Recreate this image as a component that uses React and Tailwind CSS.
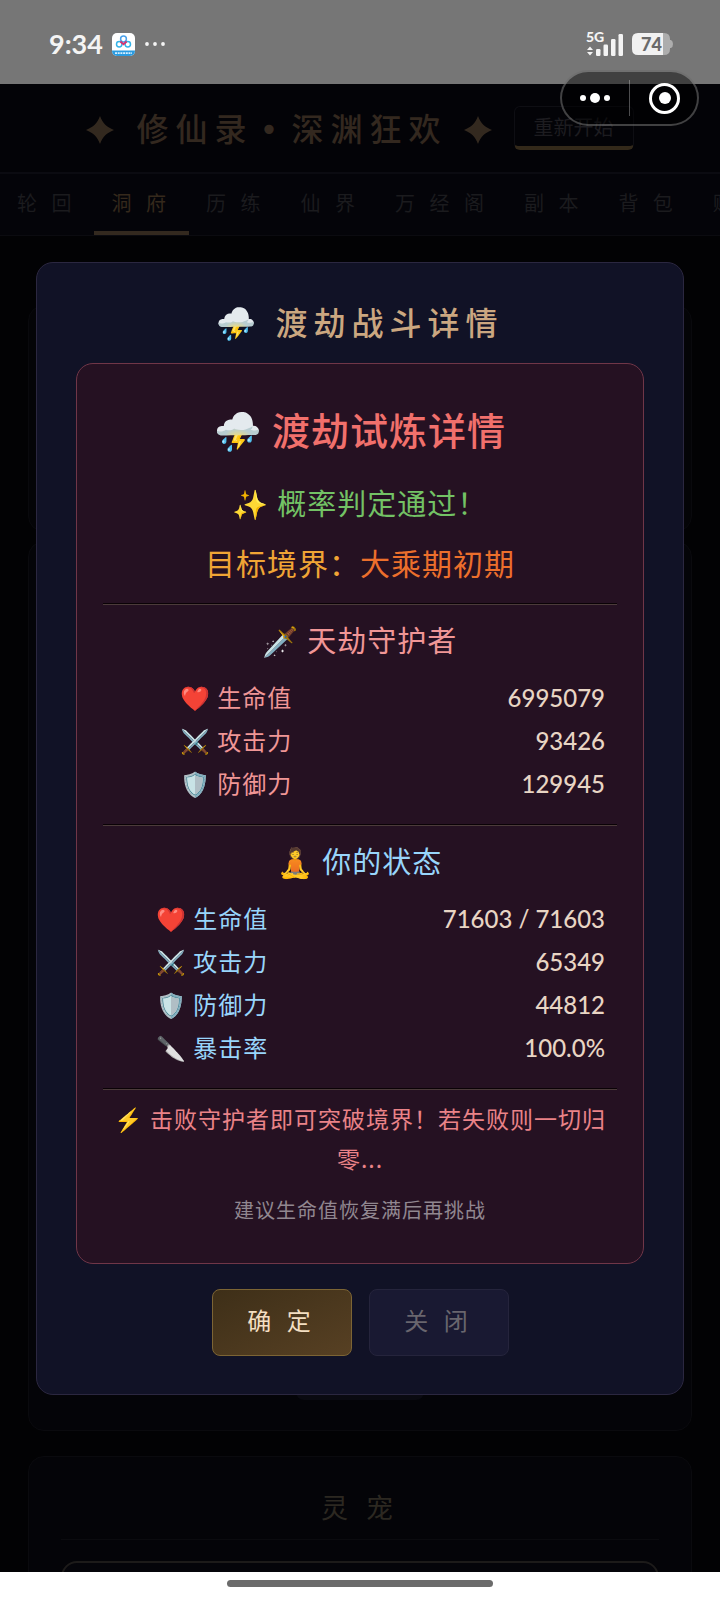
const tabs = ['轮 回', '洞 府', '历 练', '仙 界', '万 经 阁', '副 本', '背 包', '赐 福'];

const guardianStats = [
  { icon: '❤️', label: '生命值', value: '6995079' },
  { icon: '⚔️', label: '攻击力', value: '93426' },
  { icon: '🛡️', label: '防御力', value: '129945' },
];

const playerStats = [
  { icon: '❤️', label: '生命值', value: '71603 / 71603' },
  { icon: '⚔️', label: '攻击力', value: '65349' },
  { icon: '🛡️', label: '防御力', value: '44812' },
  { icon: '🔪', label: '暴击率', value: '100.0%' },
];

function Star() {
  return (
    <svg viewBox="0 0 28 28" className="mt-1 size-7 shrink-0" aria-hidden="true">
      <path
        d="M14 0 C17 7.5 20.5 11 28 14 C20.5 17 17 20.5 14 28 C11 20.5 7.5 17 0 14 C7.5 11 11 7.5 14 0Z"
        fill="#33291f"
      />
    </svg>
  );
}

function StatusBar() {
  return (
    <div className="flex h-[84px] shrink-0 items-center bg-[#767676] pt-1 pr-[46px] pl-[49px] text-[#f4f4f4]">
      <span className="font-['Lato'] text-[27px] leading-8 font-bold">9:34</span>
      <svg viewBox="0 0 23 23" className="ml-[9px] size-[23px]" aria-hidden="true">
        <clipPath id="app-clip">
          <rect width="23" height="23" rx="5" />
        </clipPath>
        <g clipPath="url(#app-clip)">
          <rect width="23" height="23" fill="#fff" />
          <rect y="17.5" width="23" height="6" fill="#2b9be0" />
          <circle cx="7.2" cy="11.3" r="2.7" fill="none" stroke="#35b3e8" strokeWidth="1.5" />
          <circle cx="15.8" cy="11.3" r="2.7" fill="none" stroke="#35b3e8" strokeWidth="1.5" />
          <circle cx="11.5" cy="6" r="2.9" fill="none" stroke="#4aa0ea" strokeWidth="1.5" />
          <path d="M8.4 8.6 L11.5 11.2 L14.6 8.6" fill="none" stroke="#d8316f" strokeWidth="1.9" />
          <path d="M3 20.2 H20" stroke="#d5efff" strokeWidth="1.8" strokeDasharray="2 .7" />
        </g>
      </svg>
      <svg viewBox="0 0 20 4" className="ml-[10px] h-1 w-5" fill="currentColor" aria-hidden="true">
        <circle cx="2" cy="2" r="1.9" />
        <circle cx="10" cy="2" r="1.9" />
        <circle cx="18" cy="2" r="1.9" />
      </svg>

      <div className="relative ml-auto h-6 w-[38px]">
        <span className="absolute -top-px left-0 font-['Lato'] text-[14px] leading-3 font-black">5G</span>
        <svg viewBox="0 0 38 24" className="size-full" fill="currentColor" aria-hidden="true">
          <path d="M1 18 L4 14.5 L7 18Z M1 20 L4 23.5 L7 20Z" />
          <rect x="10" y="17" width="4.5" height="7" rx="1.2" />
          <rect x="17.5" y="12.5" width="4.5" height="11.5" rx="1.2" />
          <rect x="25" y="7" width="4.5" height="17" rx="1.2" />
          <rect x="32.5" y="2" width="4.5" height="22" rx="1.2" />
        </svg>
      </div>
      <div className="relative ml-2 h-[22px] w-[42px]">
        <svg viewBox="0 0 42 22" className="size-full" aria-hidden="true">
          <path d="M31 0 H32 Q38 0 38 6 V7 H39 Q41 8 41 11 Q41 14 39 15 H38 V16 Q38 22 32 22 H31Z" fill="#adadad" />
          <path d="M6 0 H31 V22 H6 Q0 22 0 16 V6 Q0 0 6 0Z" fill="#f1f1f1" />
        </svg>
        <span className="absolute inset-y-0 right-0 left-[9px] font-['Lato'] text-[18px] leading-[22px] font-black text-[#6a6a6a]">
          74
        </span>
      </div>
    </div>
  );
}

function Capsule() {
  return (
    <div className="absolute top-[70px] right-[21px] flex h-14 w-[139px] items-center rounded-full border-2 border-white/25 bg-black/45">
      <button aria-label="更多" className="flex flex-1 items-center justify-center gap-1 pr-[2px] text-white">
        <span className="size-[6px] rounded-full bg-white" />
        <span className="size-[10px] rounded-full bg-white" />
        <span className="size-[6px] rounded-full bg-white" />
      </button>
      <span className="h-9 w-px bg-white/30" />
      <button aria-label="关闭小程序" className="flex flex-1 items-center justify-center pl-[2px]">
        <span className="flex size-[31px] items-center justify-center rounded-full border-[3px] border-white">
          <span className="size-3 rounded-full bg-white" />
        </span>
      </button>
    </div>
  );
}

function Divider() {
  return <hr className="border-t border-b border-t-[#0a0206] border-b-[#4b3b3a]" />;
}

function StatTable({ stats, labelClass }) {
  return (
    <table className="mt-4 mb-[18px] w-full">
      <tbody>
        {stats.map((stat) => (
          <tr key={stat.label} className="h-[43px]">
            <th scope="row" className={`pb-[3px] text-left text-[24px] leading-8 font-normal ${labelClass}`}>
              {stat.icon} {stat.label}
            </th>
            <td className="pr-3 text-right font-['Lato'] text-[24px] leading-8 font-medium tracking-normal text-[#e8d5c4]">
              {stat.value}
            </td>
          </tr>
        ))}
      </tbody>
    </table>
  );
}

function BattleModal() {
  return (
    <div className="absolute inset-x-0 top-[84px] bottom-7 flex items-center justify-center px-9">
      <div
        role="dialog"
        aria-labelledby="battle-title"
        className="w-full rounded-[17px] border border-[#2b2740] bg-[#111226] px-[39px] pt-[35px] pb-[38px] text-center"
      >
        <h2 id="battle-title" className="text-[32px] leading-[46px] font-medium tracking-[6px] text-[#cba780]">
          ⛈️ 渡劫战斗详情
        </h2>

        <section className="mt-[19px] rounded-[17px] border border-[#703648] bg-[#251122] px-[26px] pt-[37px] pb-[37px] tracking-[1px]">
          <h3 className="text-[38px] leading-[56px] font-medium text-[#f1706c]">⛈️ 渡劫试炼详情</h3>
          <p className="mt-[25px] text-[29px] leading-10 text-[#73c265]">✨ 概率判定通过！</p>
          <p className="mt-5 mb-[21px] text-[30px] leading-10 text-[#f0a535]">
            目标境界：<span className="text-[#ec6f2c]">大乘期初期</span>
          </p>
          <Divider />
          <h4 className="mt-3 text-[29px] leading-[44px] text-[#f09696]">🗡️ 天劫守护者</h4>
          <StatTable stats={guardianStats} labelClass="pl-[77px] text-[#f09696]" />
          <Divider />
          <h4 className="mt-3 text-[29px] leading-[44px] text-[#98d5fb]">🧘 你的状态</h4>
          <StatTable stats={playerStats} labelClass="pl-[53px] text-[#98d5fb]" />
          <Divider />
          <p className="mt-2 px-2 text-[23px] leading-10 text-[#ea8388]">
            ⚡ 击败守护者即可突破境界！若失败则一切归零...
          </p>
          <p className="mt-4 text-[20px] leading-8 text-[#918790]">建议生命值恢复满后再挑战</p>
        </section>

        <div className="mt-[25px] flex justify-center gap-[17px] text-[24px] leading-8 tracking-[5px]">
          <button className="h-[67px] w-[140px] rounded-lg border border-[#7c6434] bg-gradient-to-br from-[#3e2f18] to-[#574023] pb-1 text-[#f3dfc2]">
            确 定
          </button>
          <button className="h-[67px] w-[140px] rounded-lg border border-[#25243c] bg-[#191932] pb-1 text-[#69666e]">
            关 闭
          </button>
        </div>
      </div>
    </div>
  );
}

export default function App() {
  return (
    <div className="relative flex h-screen flex-col overflow-hidden bg-[#020204] font-['Noto_Sans_CJK_SC','Noto_Color_Emoji',sans-serif]">
      <StatusBar />

      <header className="flex h-[90px] shrink-0 items-center justify-center border-b-2 border-[#0b0b11] bg-[#030307]">
        <Star />
        <h1 className="mr-4 ml-[22px] text-[32px] leading-[46px] font-medium tracking-[7px] text-[#33281f]">
          修仙录
          <span className="inline-block w-[38px] pr-[7px] text-center font-['DejaVu_Sans'] tracking-normal">•</span>
          深渊狂欢
        </h1>
        <Star />
        <button className="ml-[22px] h-11 rounded-md border border-b-4 border-[#0e0e13] border-b-[#33291a] px-[19px] text-[20px] leading-8 text-[#1d1c20]">
          重新开始
        </button>
      </header>

      <nav className="flex h-[62px] shrink-0 overflow-hidden border-b border-[#0b0b10] bg-[#040409]">
        {tabs.map((tab, i) => (
          <a
            key={tab}
            href="#"
            className={`shrink-0 border-b-4 pt-[11px] pr-[18px] pl-[17px] text-[20px] leading-9 tracking-[5px] ${
              i === 1 ? 'border-[#33291f] text-[#35291c]' : 'border-transparent text-[#1b1b1e]'
            }`}
          >
            {tab}
          </a>
        ))}
      </nav>

      <main className="flex min-h-0 flex-1 flex-col overflow-hidden px-7 pt-[69px]">
        <section className="h-[227px] shrink-0 rounded-2xl border border-[#09090d] bg-[#040407]" />
        <section className="mt-[9px] flex h-[890px] shrink-0 items-end justify-center rounded-2xl border border-[#0a0a0e] bg-[#040408] pb-[30px]">
          <button className="h-14 w-32 rounded-lg bg-[#0a0a11]" aria-label="渡劫" />
        </section>
        <section className="mt-[25px] shrink-0 rounded-2xl border border-[#0a0a0e] bg-[#040408] px-8 pt-[30px]">
          <h2 className="border-b border-[#0b0b0f] pb-3 text-center text-[27px] leading-10 tracking-[6px] text-[#2c2821]">
            灵 宠
          </h2>
          <div className="mt-[21px] h-40 rounded-2xl border-2 border-[#1d1b1a] bg-[#05050a]" />
        </section>
      </main>

      <footer className="relative flex h-7 shrink-0 justify-center bg-white pt-2">
        <span className="h-[7px] w-[266px] rounded-full bg-[#6b6b6b]" />
      </footer>

      <BattleModal />
      <Capsule />
    </div>
  );
}
